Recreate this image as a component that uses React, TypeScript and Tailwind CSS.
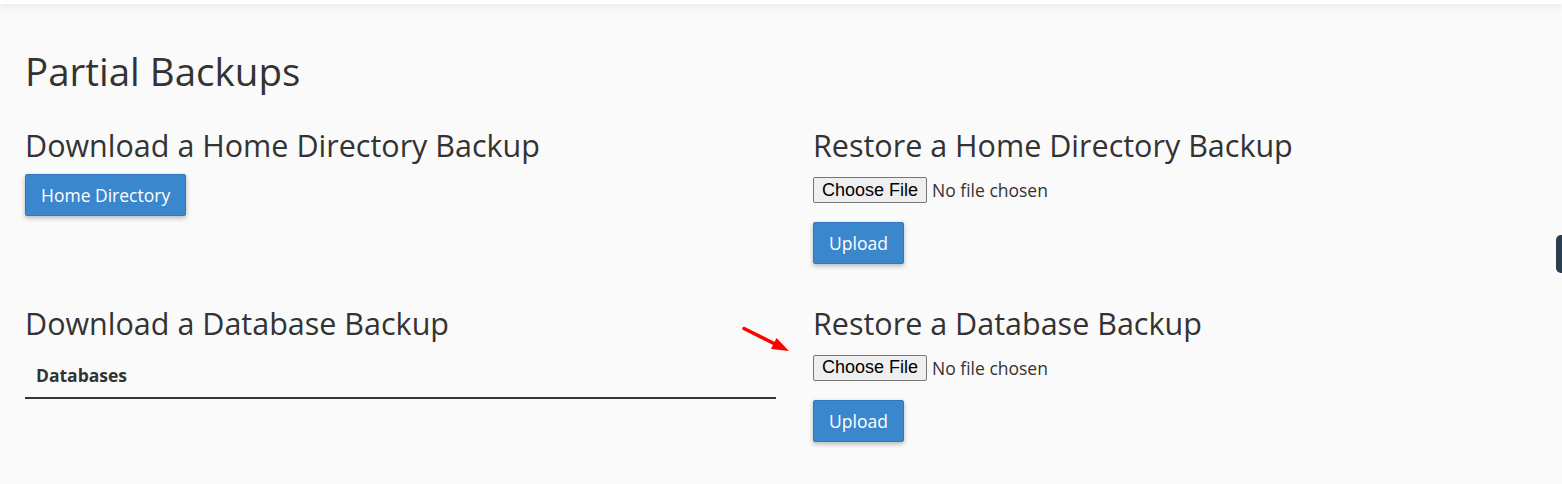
import React from "react";

const sans = "font-['Open_Sans',_'Noto_Sans',_sans-serif]";

const FilePicker: React.FC = () => (
  <div className="flex items-center gap-[5px]">
    <span className="h-[26px] px-[8px] flex items-center rounded-[2px] border border-[#767676] bg-[#efefef] text-[18px] text-black font-['Liberation_Sans',_Arial,_sans-serif]">
      Choose File
    </span>
    <span className="text-[17.5px] text-[#333]">No file chosen</span>
  </div>
);

const BlueButton: React.FC<{ label: string }> = ({ label }) => (
  <button className="h-[42px] px-[15px] rounded-[2px] border border-[#2f78bb] bg-[#3a87cd] text-[17.5px] leading-6 text-white shadow-[0_2px_5px_rgba(0,0,0,0.28)]">
    {label}
  </button>
);

export default function App() {
  return (
    <div className={`relative h-[484px] w-full overflow-hidden bg-[#fafafa] text-[#333] ${sans}`}>
      <div className="h-[4px] bg-white shadow-[0_2px_6px_rgba(0,0,0,0.1)]" />

      <div className="px-[25px]">
        <h1 className="mt-[46px] text-[38.5px] leading-[1.1] text-[#333]">Partial Backups</h1>

        <div className="mt-[37px] grid grid-cols-[751px_1fr] gap-x-[37px]">
          <section>
            <h2 className="text-[30.5px] leading-[1.1]">Download a Home Directory Backup</h2>
            <div className="mt-[11px]">
              <BlueButton label="Home Directory" />
            </div>
          </section>

          <section>
            <h2 className="text-[30.5px] leading-[1.1]">Restore a Home Directory Backup</h2>
            <div className="mt-[14px]">
              <FilePicker />
            </div>
            <div className="mt-[19px]">
              <BlueButton label="Upload" />
            </div>
          </section>

          <section className="mt-[43px]">
            <h2 className="text-[30.5px] leading-[1.1]">Download a Database Backup</h2>
            <table className="mt-[14px] w-full">
              <thead>
                <tr className="border-b-2 border-[#333]">
                  <th className="pl-[11px] pt-2 pb-[10px] text-left text-[17.5px] leading-6 font-bold">Databases</th>
                </tr>
              </thead>
            </table>
          </section>

          <section className="mt-[43px]">
            <h2 className="text-[30.5px] leading-[1.1]">Restore a Database Backup</h2>
            <div className="mt-[14px]">
              <FilePicker />
            </div>
            <div className="mt-[19px]">
              <BlueButton label="Upload" />
            </div>
          </section>
        </div>
      </div>

      <svg className="absolute left-[738px] top-[322px]" width="56" height="34" viewBox="738 322 56 34">
        <line x1="744" y1="328.5" x2="776" y2="344.5" stroke="#ff0000" strokeWidth="3.5" strokeLinecap="round" />
        <polygon points="789,351 776.5,338 771,349" fill="#ff0000" />
      </svg>

      <div className="absolute right-0 top-[235px] h-[38px] w-[6px] rounded-l-[5px] bg-[#2b3d4f]" />
    </div>
  );
}
